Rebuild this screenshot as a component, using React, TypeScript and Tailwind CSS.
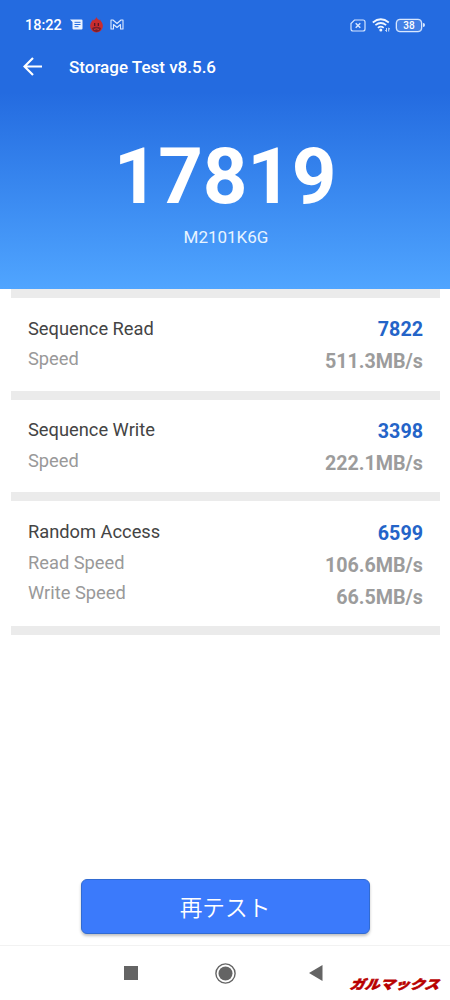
interface Result {
  title: string;
  score: string;
  rows: { label: string; value: string }[];
}

const results: Result[] = [
  { title: 'Sequence Read', score: '7822', rows: [{ label: 'Speed', value: '511.3MB/s' }] },
  { title: 'Sequence Write', score: '3398', rows: [{ label: 'Speed', value: '222.1MB/s' }] },
  {
    title: 'Random Access',
    score: '6599',
    rows: [
      { label: 'Read Speed', value: '106.6MB/s' },
      { label: 'Write Speed', value: '66.5MB/s' },
    ],
  },
];

function StatusBar() {
  return (
    <div className="flex h-[50px] items-center px-[25px]">
      <span className="w-[37px] pt-[2px] text-[14.5px] font-medium whitespace-nowrap">18:22</span>
      <svg className="ml-2" width="13" height="12" viewBox="0 0 13 12">
        <path d="M0 .5h11.5q1 0 1 1v8q0 1-1 1h-8q-1 0-1-1V3z" fill="#edf4ff" />
        <path d="M4.5 3.3h6M4.5 5.5h6M4.5 7.7h4" stroke="#246be0" strokeWidth="1" />
      </svg>
      <svg className="ml-[6px]" width="15" height="16" viewBox="0 0 15 16">
        <path d="M7.5 0c.4 2 2.1 2 2.6 3.5l1-.9c.3 1.4 1.8 2.5 2.4 4.2C15 11.5 11.5 15.5 7.5 15.5S0 11.5 1.5 6.8C2 5 3.5 4.2 3.8 2.6l1 1C5.4 2 7 2 7.5 0z" fill="#c92c2d" />
        <path d="M3 11q4.5-2.5 9 0-.5 3.500-4.500 4-4-.5-4.500-4z" fill="#791e2b" />
        <path d="M5.7 6v3M9.300 6v3" stroke="#4b1725" strokeWidth="1.2" />
        <path d="M5 12.5q2.500-1.500 5 0" stroke="#d63a35" fill="none" />
      </svg>
      <svg className="mb-[1px] ml-[6px]" width="14" height="11" viewBox="0 0 14 11">
        <path d="M1 10V1h2l4 3.5L11 1h2v9h-2.5V5.5L7 8.500l-3.500-3V10z" fill="none" stroke="#dce9ff" strokeWidth="1.1" strokeLinejoin="round" />
      </svg>
      <div className="ml-auto flex items-center">
        <svg width="16" height="13" viewBox="0 0 16 13" fill="none" stroke="#d5e6ff">
          <path d="M4.5 1H13q2 0 2 2v7q0 2-2 2H3q-2 0-2-2V4.500z" strokeWidth="1.2" />
          <path d="M5.7 4.200l4.600 4.600m0-4.600L5.700 8.800" strokeWidth="1.5" />
        </svg>
        <svg className="ml-[6px]" width="19" height="15" viewBox="0 0 19 15" fill="none" stroke="#eff6ff">
          <path d="M.8 4.500q8-6.500 16 0M3.400 7.200q5.400-4.400 10.800 0M5.900 9.800q2.900-2.400 5.800 0" strokeWidth="1.7" />
          <circle cx="8.8" cy="12" r="1.5" fill="#eff6ff" stroke="none" />
          <path d="M14.5 10v3.500M13.200 12.200l1.300 1.300M16.700 13.500V10M18 11.300L16.700 10" strokeWidth=".8" />
        </svg>
        <div className="ml-[5px] flex h-[13px] w-[26px] items-center justify-center rounded-[4px] border border-[#d9e8ff] bg-[#4380e5] pt-px text-[10px] leading-none font-medium shadow-[0_0_0_0.3px_#d9e8ff]">
          38
        </div>
        <div className="ml-[1px] h-1 w-[2px] rounded-r-sm bg-[#d9e8ff]" />
      </div>
    </div>
  );
}

function ResultCard({ title, score, rows }: Result) {
  return (
    <section className="border-b-9 border-[#ebebeb]">
      <div className="flex justify-between px-[17px] pt-[15.5px] pb-[13.2px] text-[18.3px]">
        <div className="text-[#999999]">
          <h2 className="h-[30.7px] leading-[30.7px] text-[#444444]">{title}</h2>
          {rows.map((row) => (
            <p key={row.label} className="h-[30.5px] leading-[30.5px]">{row.label}</p>
          ))}
        </div>
        <div className="-mb-[0.8px] pt-[0.8px] text-right text-[19.7px] font-bold text-[#9c9c9c]">
          <p className="h-8 leading-8 text-[#2464c8]">{score}</p>
          {rows.map((row) => (
            <p key={row.label} className="h-8 leading-8">{row.value}</p>
          ))}
        </div>
      </div>
    </section>
  );
}

export default function App() {
  return (
    <div className="flex h-[1000px] w-[450px] flex-col overflow-hidden bg-white font-[Roboto,'Noto_Sans_CJK_JP',sans-serif]">
      <header className="h-[289px] shrink-0 bg-linear-to-b from-[#246be0] from-[32%] to-[#50a5ff] text-white">
        <StatusBar />
        <div className="flex h-[34px] items-center pl-[23px]">
          <svg width="20" height="20" viewBox="0 0 20 20" fill="none" stroke="white" strokeWidth="2.2">
            <path d="M19 9.5H2M10 1L1.500 9.500 10 18" />
          </svg>
          <h1 className="ml-[26px] pt-px text-[17px] font-medium">Storage Test v8.5.6</h1>
        </div>
        <div className="mt-[53px] text-center text-[78px] leading-[80px] font-bold tracking-[-0.3px]">17819</div>
        <div className="mt-[8px] pl-[2px] text-center text-[17px] leading-6 text-[#e8f4ff]">M2101K6G</div>
      </header>
      <main className="mr-[10px] ml-[11px] border-t-9 border-[#ebebeb]">
        {results.map((result) => (
          <ResultCard key={result.title} {...result} />
        ))}
      </main>
      <div className="mt-auto flex justify-center pb-[11px]">
        <button className="h-[55px] w-[289px] rounded-[6px] border border-[#316bd2] bg-[#3b7afb] pt-[5px] text-[22.7px] font-[350] text-white shadow-[0_2px_3px_rgba(0,0,0,0.25)]">
          再テスト
        </button>
      </div>
      <nav className="flex h-[55px] shrink-0 items-center border-t border-[#f2f2f2] pl-[124px]">
        <div className="size-[14px] bg-[#646464]" />
        <svg className="ml-[77px]" width="21" height="21" viewBox="0 0 21 21">
          <circle cx="10.5" cy="10.5" r="9.6" fill="none" stroke="#646464" strokeWidth="1.4" />
          <circle cx="10.5" cy="10.5" r="7" fill="#646464" />
        </svg>
        <svg className="ml-[73px]" width="14" height="16" viewBox="0 0 14 16">
          <path d="M0 8L13.5 0v16z" fill="#646464" />
        </svg>
        <div className="mt-[23px] ml-[28px] origin-left scale-y-85 -skew-x-[20deg] text-[15px] leading-4 font-black whitespace-nowrap text-[#b80000] [-webkit-text-stroke:0.7px_#b80000]">
          ガルマックス
        </div>
      </nav>
    </div>
  );
}
